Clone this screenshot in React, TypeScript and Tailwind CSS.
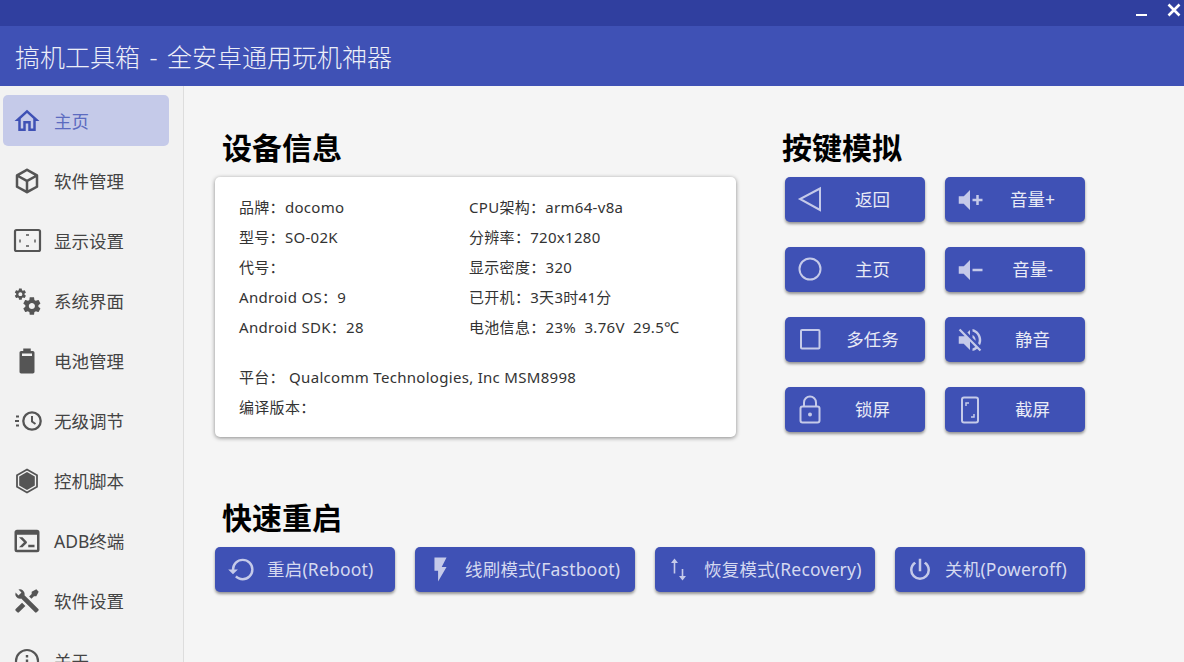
import React from "react";

const P = ({ d, size = 30 }: { d: string; size?: number }) => (
  <svg width={size} height={size} viewBox="0 0 24 24" fill="currentColor"><path d={d} /></svg>
);
const S = ({ children }: { children: React.ReactNode }) => (
  <svg width={30} height={30} viewBox="0 0 30 30" fill="none" stroke="currentColor" strokeWidth={2}>{children}</svg>
);

const home = "M12 5.69L17 10.19V18H15V12H9V18H7V10.19L12 5.69M12 3L2 12H5V20H11V14H13V20H19V12H22L12 3Z";
const cube = "M21,16.5C21,16.88 20.79,17.21 20.47,17.38L12.57,21.82C12.41,21.94 12.21,22 12,22C11.79,22 11.59,21.94 11.43,21.82L3.53,17.38C3.21,17.21 3,16.88 3,16.5V7.5C3,7.12 3.21,6.79 3.53,6.62L11.43,2.18C11.59,2.06 11.79,2 12,2C12.21,2 12.41,2.06 12.57,2.18L20.47,6.62C20.79,6.79 21,7.12 21,7.5V16.5M12,4.15L6.04,7.5L12,10.85L17.96,7.5L12,4.15M5,15.91L11,19.29V12.58L5,9.21V15.91M19,15.91V9.21L13,12.58V19.29L19,15.91Z";
const cogs = "M15.9,18.45C17.25,18.45 18.35,17.35 18.35,16C18.35,14.65 17.25,13.55 15.9,13.55C14.54,13.55 13.45,14.65 13.45,16C13.45,17.35 14.54,18.45 15.9,18.45M21.1,16.68L22.58,17.84C22.71,17.95 22.75,18.13 22.66,18.29L21.26,20.71C21.17,20.86 21,20.92 20.83,20.86L19.09,20.16C18.73,20.44 18.34,20.67 17.92,20.85L17.65,22.7C17.62,22.87 17.47,23 17.3,23H14.5C14.32,23 14.18,22.87 14.15,22.7L13.89,20.85C13.46,20.67 13.07,20.44 12.71,20.16L10.96,20.86C10.81,20.92 10.62,20.86 10.54,20.71L9.14,18.29C9.05,18.13 9.09,17.95 9.22,17.84L10.7,16.68L10.65,16L10.7,15.31L9.22,14.16C9.09,14.05 9.05,13.86 9.14,13.71L10.54,11.29C10.62,11.13 10.81,11.07 10.96,11.13L12.71,11.84C13.07,11.56 13.46,11.32 13.89,11.15L14.15,9.29C14.18,9.13 14.32,9 14.5,9H17.3C17.47,9 17.62,9.13 17.65,9.29L17.92,11.15C18.34,11.32 18.73,11.56 19.09,11.84L20.83,11.13C21,11.07 21.17,11.13 21.26,11.29L22.66,13.71C22.75,13.86 22.71,14.05 22.58,14.16L21.1,15.31L21.15,16L21.1,16.68M6.69,8.07C7.56,8.07 8.26,7.37 8.26,6.5C8.26,5.63 7.56,4.92 6.69,4.92A1.58,1.58 0 0,0 5.11,6.5C5.11,7.37 5.82,8.07 6.69,8.07M10.03,6.94L11,7.68C11.07,7.75 11.09,7.87 11.03,7.97L10.13,9.53C10.08,9.63 9.96,9.67 9.86,9.63L8.74,9.18L8,9.62L7.81,10.81C7.79,10.92 7.7,11 7.59,11H5.79C5.67,11 5.58,10.92 5.56,10.81L5.4,9.62L4.64,9.18L3.5,9.63C3.41,9.67 3.3,9.63 3.24,9.53L2.34,7.97C2.28,7.87 2.31,7.75 2.39,7.68L3.34,6.94L3.31,6.5L3.34,6.06L2.39,5.32C2.31,5.25 2.28,5.13 2.34,5.03L3.24,3.47C3.3,3.37 3.41,3.33 3.5,3.37L4.63,3.82L5.4,3.38L5.56,2.19C5.58,2.08 5.67,2 5.79,2H7.59C7.7,2 7.79,2.08 7.81,2.19L8,3.38L8.74,3.82L9.86,3.37C9.96,3.33 10.08,3.37 10.13,3.47L11.03,5.03C11.09,5.13 11.07,5.25 11,5.32L10.03,6.06L10.06,6.5L10.03,6.94Z";
const battery = "M16.67,4C17.4,4 18,4.6 18,5.33V20.67C18,21.4 17.4,22 16.67,22H7.33C6.6,22 6,21.4 6,20.67V5.33C6,4.6 6.6,4 7.33,4H9V2H15V4H16.67M16,8V6H8V8H16Z";
const consoleI = "M20,19V7H4V19H20M20,3A2,2 0 0,1 22,5V19A2,2 0 0,1 20,21H4A2,2 0 0,1 2,19V5C2,3.89 2.9,3 4,3H20M13,17V15H18V17H13M9.58,13L5.57,9H8.4L11.7,12.3C12.09,12.69 12.09,13.33 11.7,13.72L8.42,17H5.59L9.58,13Z";
const tools = "M21.71 20.29L20.29 21.71A1 1 0 0 1 18.88 21.71L7 9.85A3.81 3.81 0 0 1 6 10A4 4 0 0 1 2.22 4.7L4.76 7.24L5.29 6.71L6.71 5.29L7.24 4.76L4.7 2.22A4 4 0 0 1 10 6A3.81 3.81 0 0 1 9.85 7L21.71 18.88A1 1 0 0 1 21.71 20.29M2.29 18.88A1 1 0 0 0 2.29 20.29L3.71 21.71A1 1 0 0 0 5.12 21.71L10.59 16.25L7.76 13.42M20 2L16 4V6L13.83 8.17L15.83 10.17L18 8H20L22 4Z";
const volPlus = "M3,9H7L12,4V20L7,15H3V9M14,11H17V8H19V11H22V13H19V16H17V13H14V11Z";
const volMinus = "M3,9H7L12,4V20L7,15H3V9M14,11H22V13H14V11Z";
const volOff = "M12,4L9.91,6.09L12,8.18M4.27,3L3,4.27L7.73,9H3V15H7L12,20V13.27L16.25,17.53C15.58,18.04 14.83,18.46 14,18.7V20.77C15.38,20.45 16.63,19.82 17.68,18.96L19.73,21L21,19.73L12,10.73M19,12C19,12.94 18.8,13.82 18.46,14.64L19.97,16.15C20.62,14.91 21,13.5 21,12C21,7.72 18,4.14 14,3.23V5.29C16.89,6.15 19,8.83 19,12M16.5,12C16.5,10.23 15.5,8.71 14,7.97V10.18L16.45,12.63C16.5,12.43 16.5,12.21 16.5,12Z";
const restore = "M13,3A9,9 0 0,0 4,12H1L4.96,16.03L9,12H6A7,7 0 0,1 13,5A7,7 0 0,1 20,12A7,7 0 0,1 13,19C11.07,19 9.32,18.21 8.06,16.94L6.64,18.36C8.27,20 10.5,21 13,21A9,9 0 0,0 22,12A9,9 0 0,0 13,3Z";
const flash = "M7,2V13H10V22L17,10H13L17,2H7Z";
const power = "M16.56,5.44L15.11,6.89C16.84,7.94 18,9.83 18,12A6,6 0 0,1 12,18A6,6 0 0,1 6,12C6,9.83 7.16,7.94 8.88,6.88L7.44,5.44C5.36,6.88 4,9.28 4,12A8,8 0 0,0 12,20A8,8 0 0,0 20,12C20,9.28 18.64,6.88 16.56,5.44M13,3H11V13H13";

const nav: { label: string; icon: React.ReactNode; active?: boolean }[] = [
  { label: "主页", icon: <P d={home} />, active: true },
  { label: "软件管理", icon: <P d={cube} /> },
  {
    label: "显示设置",
    icon: (
      <S>
        <rect x="3" y="4" width="25" height="21" rx="1.5" strokeWidth="2.2" />
        <path d="M14 9h3M14 20h3M8 13.5v3M23 13.5v3" strokeWidth="1.4" />
      </S>
    ),
  },
  { label: "系统界面", icon: <P d={cogs} /> },
  { label: "电池管理", icon: <P d={battery} /> },
  {
    label: "无级调节",
    icon: (
      <S>
        <circle cx="20" cy="15" r="8.7" strokeWidth="2.3" />
        <path d="M20 10V15.5L23.5 18M3 15H7M4 10.5H7M4 19.5H7" strokeWidth="2" />
      </S>
    ),
  },
  {
    label: "控机脚本",
    icon: (
      <S>
        <path d="M15 3.5L25 9.2V20.8L15 26.5L5 20.8V9.2Z" strokeWidth="1.8" />
        <path d="M15 6L22.8 10.5V19.5L15 24L7.2 19.5V10.5Z" fill="currentColor" stroke="none" />
      </S>
    ),
  },
  { label: "ADB终端", icon: <P d={consoleI} /> },
  { label: "软件设置", icon: <P d={tools} size={28} /> },
  {
    label: "关于",
    icon: (
      <S>
        <circle cx="15" cy="15" r="11" strokeWidth="2.2" />
        <path d="M15 13.5V21M15 9V11.5" strokeWidth="2.4" />
      </S>
    ),
  },
];

const keys: { label: string; icon: React.ReactNode }[] = [
  { label: "返回", icon: <S><path d="M25 3.5V25L5 14Z" /></S> },
  { label: "音量+", icon: <P d={volPlus} /> },
  { label: "主页", icon: <S><circle cx="15" cy="14" r="10.5" /></S> },
  { label: "音量-", icon: <P d={volMinus} /> },
  { label: "多任务", icon: <S><rect x="6" y="5" width="18.5" height="18.5" rx="1" /></S> },
  { label: "静音", icon: <P d={volOff} /> },
  {
    label: "锁屏",
    icon: (
      <S>
        <rect x="5.5" y="11.5" width="19" height="16" rx="2" />
        <path d="M9 11.5V7.5A6 6 0 0 1 21 7.5V11.5" />
        <circle cx="15" cy="19.5" r="2" fill="currentColor" stroke="none" />
      </S>
    ),
  },
  {
    label: "截屏",
    icon: (
      <S>
        <rect x="7" y="2.5" width="16" height="25" rx="2" />
        <path d="M11 11V8H14M19 19V22H16" strokeWidth="1.5" />
      </S>
    ),
  },
];

const reboots: { label: string; icon: React.ReactNode; w: string; box: string }[] = [
  { label: "重启(Reboot)", icon: <P d={restore} size={29} />, w: "w-[180px]", box: "w-[52px]" },
  { label: "线刷模式(Fastboot)", icon: <P d={flash} size={29} />, w: "w-[220px]", box: "w-[50px]" },
  {
    label: "恢复模式(Recovery)",
    icon: (
      <S>
        <path d="M9.5 7V18.5M17.5 14V22" strokeWidth="1.6" />
        <path d="M6 8L9.5 3.5L13 8Z M14 21L17.5 25.5L21 21Z" fill="currentColor" stroke="none" />
      </S>
    ),
    w: "w-[220px]",
    box: "w-[49px]",
  },
  { label: "关机(Poweroff)", icon: <P d={power} />, w: "w-[190px]", box: "w-[50px]" },
];

const col1 = ["品牌：docomo", "型号：SO-02K", "代号：", "Android OS：9", "Android SDK：28"];
const col2 = ["CPU架构：arm64-v8a", "分辨率：720x1280", "显示密度：320", "已开机：3天3时41分", "电池信息：23%  3.76V  29.5℃"];

const Title = ({ children, className = "pl-[7px]" }: { children: React.ReactNode; className?: string }) => (
  <h2 className={`h-10 leading-10 mb-[9px] text-[30px] font-bold text-black ${className}`}>{children}</h2>
);

export default function App() {
  return (
    <div className="flex h-[662px] w-[1184px] flex-col overflow-hidden bg-[#f5f5f5] font-['Noto_Sans','Noto_Sans_CJK_SC',sans-serif]">
      <div className="flex h-[26px] shrink-0 items-start justify-end bg-[#303f9f] text-white">
        <span className="mt-[14px] mr-[20px] h-[2px] w-[11px] bg-white" />
        <svg className="mt-[3px] mr-[3px]" width="14" height="14" viewBox="0 0 14 14" stroke="white" strokeWidth="2.6" fill="none">
          <path d="M1.5 1.5L12.5 12.5M12.5 1.5L1.5 12.5" />
        </svg>
      </div>
      <div className="flex h-[60px] shrink-0 items-center bg-[#3f51b5] pl-[15px] text-[25px] font-light [word-spacing:3px] whitespace-pre text-[#eceef8]">
        <span className="pt-[3px]">搞机工具箱 - 全安卓通用玩机神器</span>
      </div>
      <div className="flex min-h-0 flex-1">
        <nav className="flex w-[184px] shrink-0 flex-col gap-[9px] border-r border-[#dddddd] bg-[#f2f2f2] px-[3px] pt-[9px]">
          {nav.map((n) => (
            <div
              key={n.label}
              className={`flex h-[51px] w-[166px] shrink-0 items-center gap-3 rounded-[5px] pl-[9px] text-[17.5px] ${n.active ? "bg-[#c5cae9] text-[#3f51b5]" : "text-[#444444]"}`}
            >
              <span className={`flex w-[30px] justify-center ${n.active ? "text-[#3f51b5]" : "text-[#555555]"}`}>{n.icon}</span>
              <span className={`pt-[2px] ${n.active ? "text-[#5c6bc0]" : ""}`}>{n.label}</span>
            </div>
          ))}
        </nav>
        <main className="flex-1 pt-[42px] pl-[31px]">
          <div className="flex gap-[49px]">
            <section className="w-[521px]">
              <Title>设备信息</Title>
              <div className="h-[260px] rounded-[5px] bg-white pt-[15px] pl-6 text-[15px] leading-[30px] tracking-[0.3px] whitespace-pre text-[#333333] shadow-[0_1px_4px_rgba(0,0,0,0.45)]">
                <div className="flex">
                  <div className="w-[230px]">
                    {col1.map((t) => (
                      <div key={t}>{t}</div>
                    ))}
                  </div>
                  <div>
                    {col2.map((t) => (
                      <div key={t}>{t}</div>
                    ))}
                  </div>
                </div>
                <div className="mt-5">平台： Qualcomm Technologies, Inc MSM8998</div>
                <div>编译版本：</div>
              </div>
            </section>
            <section>
              <Title className="-ml-[3px]">按键模拟</Title>
              <div className="grid grid-cols-[140px_140px] gap-x-5 gap-y-[25px]">
                {keys.map((k) => (
                  <button
                    key={k.label}
                    className="flex h-[45px] items-center rounded-[5px] bg-[#3f51b5] text-[17.5px] text-[#e8eaf6] shadow-[0_2px_3px_rgba(0,0,0,0.4)]"
                  >
                    <span className="flex w-[50px] justify-center text-[#c5cae9]">{k.icon}</span>
                    <span className="flex-1 pr-[15px] text-center">{k.label}</span>
                  </button>
                ))}
              </div>
            </section>
          </div>
          <section className="mt-[61px]">
            <Title>快速重启</Title>
            <div className="flex gap-5">
              {reboots.map((r) => (
                <button
                  key={r.label}
                  className={`flex h-[45px] items-center rounded-[5px] bg-[#3f51b5] text-[17.5px] tracking-[0.2px] text-[#d5d9f0] shadow-[0_2px_3px_rgba(0,0,0,0.4)] ${r.w}`}
                >
                  <span className={`flex justify-center text-[#c5cae9] ${r.box}`}>{r.icon}</span>
                  <span>{r.label}</span>
                </button>
              ))}
            </div>
          </section>
        </main>
      </div>
    </div>
  );
}
